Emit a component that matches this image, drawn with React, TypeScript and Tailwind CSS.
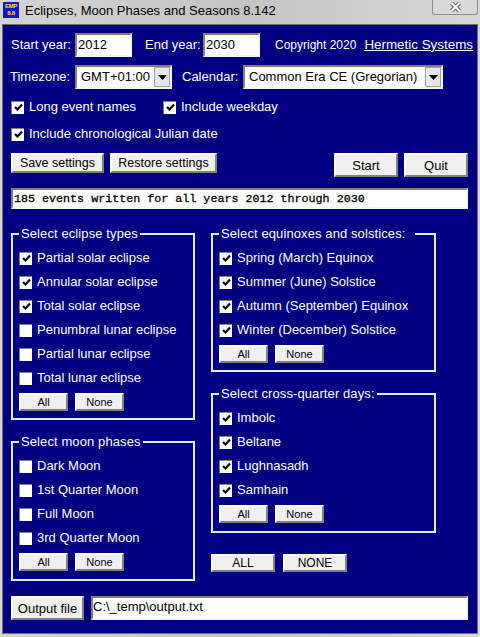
import React from "react";

const btn =
  "bg-[#f0f0f0] border-2 border-t-white border-l-white border-r-[#808080] border-b-[#808080] text-black text-center leading-none whitespace-nowrap";

const field =
  "bg-white border-2 border-t-[#808080] border-l-[#808080] border-r-[#f4f4f4] border-b-[#f4f4f4] text-black";

const Check = ({ label, checked = true }: { label: string; checked?: boolean }) => (
  <div className="flex items-center h-6 text-white">
    <div className="w-[13px] h-[13px] bg-white border-t border-l border-[#808080] flex items-center justify-center shrink-0">
      {checked && (
        <svg width="9" height="9" viewBox="0 0 9 9">
          <path d="M1 4 L3.5 6.5 L8 1.5" fill="none" stroke="#000" strokeWidth="2.2" />
        </svg>
      )}
    </div>
    <span className="ml-[5px] whitespace-nowrap">{label}</span>
  </div>
);

const AllNone = ({ className = "" }: { className?: string }) => (
  <div className={"flex gap-[7px] text-[11px] " + className}>
    <button className={btn + " w-[49px] h-[18px]"}>All</button>
    <button className={btn + " w-[49px] h-[18px]"}>None</button>
  </div>
);

const Arrow = () => (
  <div className="w-[16px] h-5 bg-[#e8e8e8] border border-[#a0a0a0] flex items-center justify-center">
    <svg width="9" height="5" viewBox="0 0 9 5">
      <path d="M0 0 H9 L4.5 5 Z" fill="#000" />
    </svg>
  </div>
);

const Group = ({
  title,
  items,
  className = "",
}: {
  title: string;
  items: { label: string; checked?: boolean }[];
  className?: string;
}) => (
  <fieldset className={"border-2 border-[#e8e8f4] pl-[6px] pb-[10px] pt-0 " + className}>
    <legend className="ml-0 px-[2px] text-white leading-4 tracking-[0.1px] whitespace-pre">{title}</legend>
    <div className="flex flex-col mt-1">
      {items.map((item) => (
        <Check key={item.label} label={item.label} checked={item.checked} />
      ))}
    </div>
    <AllNone className="mt-[3px]" />
  </fieldset>
);

export default function App() {
  return (
    <div className="w-[480px] h-[637px] overflow-hidden flex flex-col bg-gradient-to-r from-[#d4d4d4] via-[#c4c4c4] to-[#d8d8d8] font-['Liberation_Sans',sans-serif] text-[13px]">
      <div className="h-6 shrink-0 flex items-start px-[2px] text-black">
        <div className="w-4 h-4 mt-[2px] ml-[1px] bg-[#1414d0] flex flex-col items-center justify-center text-[6px] leading-[7px] font-bold tracking-tighter text-[#ffe000]">
          <span>EMP</span>
          <span>8.8</span>
        </div>
        <span className="ml-[6px] mt-[1px] leading-5">Eclipses, Moon Phases and Seasons 8.142</span>
        <div className="ml-auto w-[46px] h-[15px] border border-t-0 border-[#8c8c8c] rounded-b-[3px] bg-[#d8d8d8] flex items-center justify-center">
          <svg width="11" height="10" viewBox="0 0 11 10">
            <path d="M1.5 1 L9.5 9 M9.5 1 L1.5 9" stroke="#555" strokeWidth="4" />
            <path d="M1.5 1 L9.5 9 M9.5 1 L1.5 9" stroke="#fff" strokeWidth="2.2" />
          </svg>
        </div>
      </div>

      <div className="mx-[2px] h-[610px] bg-[#000080] border border-[#707070] px-2 text-white">
        {/* year row */}
        <div className="flex items-center h-6 mt-2 whitespace-nowrap *:shrink-0">
          <span className="w-[64px]">Start year:</span>
          <div className={field + " w-[57px] h-6 leading-5 pl-[1px]"}>2012</div>
          <span className="ml-[13px] w-[58px]">End year:</span>
          <div className={field + " w-[57px] h-6 leading-5 pl-[1px]"}>2030</div>
          <span className="ml-[15px] text-[12px]">Copyright 2020</span>
          <span className="ml-[8px] text-[13.4px] underline">Hermetic Systems</span>
        </div>

        {/* zone row */}
        <div className="flex items-center h-6 mt-2 whitespace-nowrap">
          <span className="w-[64px] -ml-px mr-px">Timezone:</span>
          <div className={field + " w-[97px] h-6 flex items-center pl-[4px]"}>
            <span className="flex-1">GMT+01:00</span>
            <Arrow />
          </div>
          <span className="ml-[10px] w-[61px]">Calendar:</span>
          <div className={field + " w-[200px] h-6 flex items-center pl-[4px]"}>
            <span className="flex-1">Common Era CE (Gregorian)</span>
            <Arrow />
          </div>
        </div>

        {/* options */}
        <div className="flex mt-[6px]">
          <div className="w-[152px]">
            <Check label="Long event names" />
          </div>
          <Check label="Include weekday" />
        </div>
        <div className="mt-[3px]">
          <Check label="Include chronological Julian date" />
        </div>

        {/* buttons */}
        <div className="flex items-start mt-[7px] h-6 text-[12.5px]">
          <button className={btn + " w-[93px] h-5"}>Save settings</button>
          <button className={btn + " w-[107px] h-5 ml-[6px]"}>Restore settings</button>
          <button className={btn + " w-[64px] h-6 ml-[117px] text-[13px]"}>Start</button>
          <button className={btn + " w-[64px] h-6 ml-[6px] text-[13px]"}>Quit</button>
        </div>

        {/* status */}
        <div className={field + " w-[457px] h-[21px] mt-[11px] font-['Liberation_Mono',monospace] text-[11.7px] leading-[19px] pl-[1px] whitespace-nowrap [-webkit-text-stroke:0.3px_#000]"}>
          185 events written for all years 2012 through 2030
        </div>

        <div className="flex mt-[17px] items-start">
          <div className="w-[184px] flex flex-col">
            <Group
              title="Select eclipse types"
              className="h-[194px]"
              items={[
                { label: "Partial solar eclipse" },
                { label: "Annular solar eclipse" },
                { label: "Total solar eclipse" },
                { label: "Penumbral lunar eclipse", checked: false },
                { label: "Partial lunar eclipse", checked: false },
                { label: "Total lunar eclipse", checked: false },
              ]}
            />
            <Group
              title="Select moon phases"
              className="h-[147px] mt-[14px]"
              items={[
                { label: "Dark Moon", checked: false },
                { label: "1st Quarter Moon", checked: false },
                { label: "Full Moon", checked: false },
                { label: "3rd Quarter Moon", checked: false },
              ]}
            />
          </div>
          <div className="w-[225px] ml-4 flex flex-col">
            <Group
              title="Select equinoxes and solstices:  "
              className="h-[146px]"
              items={[
                { label: "Spring (March) Equinox" },
                { label: "Summer (June) Solstice" },
                { label: "Autumn (September) Equinox" },
                { label: "Winter (December) Solstice" },
              ]}
            />
            <Group
              title="Select cross-quarter days:"
              className="h-[147px] mt-[14px]"
              items={[
                { label: "Imbolc" },
                { label: "Beltane" },
                { label: "Lughnasadh" },
                { label: "Samhain" },
              ]}
            />
            <div className="flex gap-2 mt-[21px] text-[12px]">
              <button className={btn + " w-16 h-[18px]"}>ALL</button>
              <button className={btn + " w-16 h-[18px]"}>NONE</button>
            </div>
          </div>
        </div>

        <div className="flex items-center mt-[15px]">
          <button className={btn + " w-[73px] h-6"}>Output file</button>
          <div className={field + " w-[377px] h-6 ml-[7px] leading-[18px]"}>C:\_temp\output.txt</div>
        </div>
      </div>
    </div>
  );
}
